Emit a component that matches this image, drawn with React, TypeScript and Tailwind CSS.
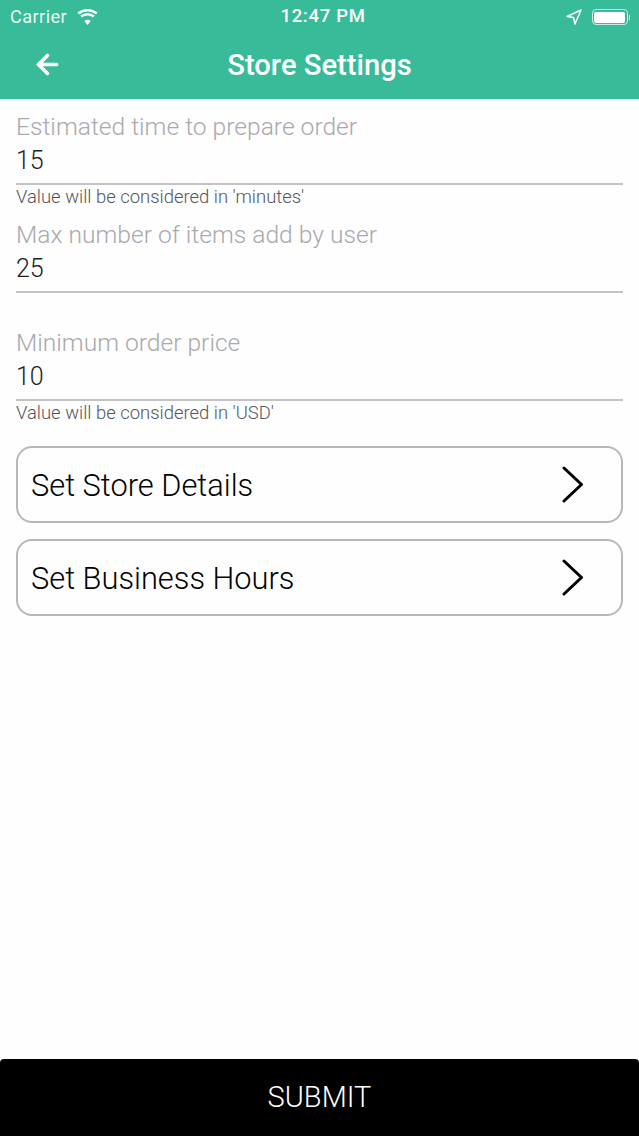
import { ArrowLeft } from "lucide-react";

const fields = [
  { label: "Estimated time to prepare order", value: "15", hint: "Value will be considered in 'minutes'" },
  { label: "Max number of items add by user", value: "25", hint: "" },
  { label: "Minimum order price", value: "10", hint: "Value will be considered in 'USD'" },
];

const links = ["Set Store Details", "Set Business Hours"];

const StatusBar = () => (
  <div className="flex h-[33px] items-center justify-between pl-[10px] pr-[9px] pt-[1px] text-white">
    <div className="flex w-[203px] items-center gap-[9px]">
      <span className="text-[18.2px] tracking-[0.4px] opacity-90">Carrier</span>
      <svg width="23" height="16" viewBox="0 0 22 16" fill="currentColor">
        <path d="M11 16l3.2-4a5 5 0 0 0-6.4 0z" />
        <path d="M11 6.6a9 9 0 0 1 5.6 2l1.6-2a11.6 11.6 0 0 0-14.4 0l1.6 2a9 9 0 0 1 5.6-2z" />
        <path d="M11 2.6c3.2 0 6.1 1.1 8.4 3L21 3.6A16 16 0 0 0 11 0 16 16 0 0 0 1 3.6l1.6 2a13 13 0 0 1 8.4-3z" />
      </svg>
    </div>
    <span className="text-[18.5px] font-medium tracking-[0.7px]">12:47 PM</span>
    <div className="flex w-[197px] items-center justify-end gap-[10px]">
      <svg width="16" height="16" viewBox="0 0 16 16" fill="none" stroke="currentColor" strokeWidth="1.5" strokeLinejoin="round">
        <path d="M15 1L1 7.5l6.5 1L9 15z" />
      </svg>
      <div className="flex items-center">
        <div className="h-[16px] w-[36px] rounded-[4px] border border-[#c9efe3] p-[1.5px]">
          <div className="h-full w-full rounded-[2px] bg-white" />
        </div>
        <div className="ml-[1px] h-[5px] w-[1.5px] bg-[#c9efe3]" />
      </div>
    </div>
  </div>
);

export default function App() {
  return (
    <div className="flex h-[1136px] w-[639px] flex-col overflow-hidden bg-[#fefefe] font-['Roboto',sans-serif]">
      <header className="h-[99px] shrink-0 bg-[#38bb98]">
        <StatusBar />
        <div className="flex h-[66px] items-center">
          <div className="mb-[3px] flex w-[94px] justify-center">
            <ArrowLeft className="h-[31px] w-[31px] text-white" strokeWidth={2.8} />
          </div>
          <h1 className="flex-1 pr-[94px] text-center text-[29.2px] font-medium text-white">Store Settings</h1>
        </div>
      </header>

      <main className="flex-1 px-[16px] pt-[11px]">
        {fields.map((f) => (
          <div key={f.label} className="h-[108px]">
            <div className="text-[24.6px] leading-[34px] font-light text-[#a9a9ae]">{f.label}</div>
            <div className="h-[41px] border-b-2 border-[#c4c4c6] pt-[2px] text-[25px] leading-[30px] font-light text-[#222]">
              {f.value}
            </div>
            {f.hint && <div className="text-[18.45px] leading-[25px] font-light text-[#55555a]">{f.hint}</div>}
          </div>
        ))}

        <div className="mt-[12px] flex flex-col gap-[16px]">
          {links.map((l) => (
            <div
              key={l}
              className="flex h-[77px] items-center justify-between rounded-[16px] border-2 border-[#b8b8ba] pl-[13px] pr-[37px]"
            >
              <span className="pt-[3px] text-[30.8px] font-light text-black">{l}</span>
              <svg width="22" height="37" viewBox="0 0 22 37" fill="none" stroke="#000" strokeWidth="3" strokeLinecap="round" strokeLinejoin="round">
                <path d="M2 2l17.5 16.5L2 35" />
              </svg>
            </div>
          ))}
        </div>
      </main>

      <button className="h-[77px] shrink-0 rounded-t-[4px] bg-black text-center text-[29px] font-light text-white">
        SUBMIT
      </button>
    </div>
  );
}
